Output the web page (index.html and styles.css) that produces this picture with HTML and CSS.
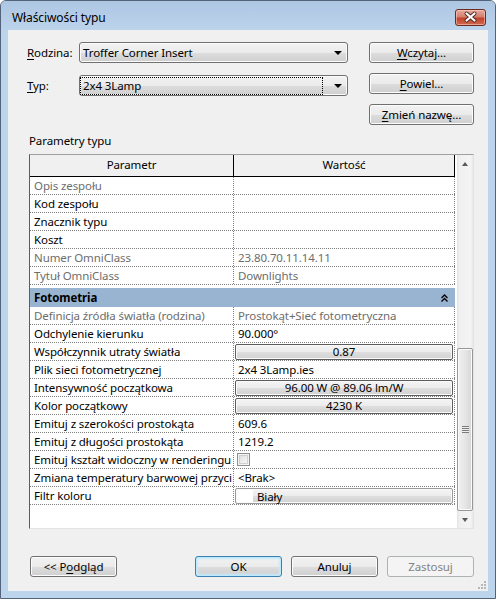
FILE: index.html
```html
<!DOCTYPE html>
<html lang="pl">
<head>
  <meta charset="UTF-8">
  <meta name="viewport" content="width=device-width, initial-scale=1.0">
  <title>Właściwości typu</title>
  <link rel="stylesheet" href="styles.css">
</head>
<body>
  <div class="window">
    <!-- Title bar -->
    <div class="titlebar">
      <span class="title">Właściwości typu</span>
      <button class="close-btn">
        <svg width="31" height="17" viewBox="0 0 31 17">
          <path d="M11.5 4.5 L19.5 11.5 M19.5 4.5 L11.5 11.5" stroke="#4a2a26" stroke-width="4" stroke-linecap="round"/>
          <path d="M11.5 4.5 L19.5 11.5 M19.5 4.5 L11.5 11.5" stroke="#ffffff" stroke-width="2.2" stroke-linecap="round"/>
        </svg>
      </button>
    </div>

    <div class="client">
      <!-- Family / type selectors and the buttons beside them -->
      <div class="top">
        <div class="fields">
          <div class="field">
            <label><u>R</u>odzina:</label>
            <div class="combo">
              <span class="combo-text">Troffer Corner Insert</span>
              <span class="arrow"></span>
            </div>
          </div>
          <div class="field">
            <label><u>T</u>yp:</label>
            <div class="combo">
              <span class="combo-text focus-rect">2x4 3Lamp</span>
              <span class="arrow"></span>
            </div>
          </div>
        </div>
        <div class="side-buttons">
          <button class="btn"><u>W</u>czytaj…</button>
          <button class="btn"><u>P</u>owiel…</button>
          <button class="btn"><u>Z</u>mień nazwę…</button>
        </div>
      </div>

      <div class="section-label">Parametry typu</div>

      <!-- Property grid -->
      <div class="grid">
        <div class="grid-body">
          <div class="row header">
            <div class="cell c1">Parametr</div>
            <div class="cell c2">Wartość</div>
          </div>
          <div class="row disabled"><div class="cell c1">Opis zespołu</div><div class="cell c2"></div></div>
          <div class="row"><div class="cell c1">Kod zespołu</div><div class="cell c2"></div></div>
          <div class="row"><div class="cell c1">Znacznik typu</div><div class="cell c2"></div></div>
          <div class="row"><div class="cell c1">Koszt</div><div class="cell c2"></div></div>
          <div class="row disabled"><div class="cell c1">Numer OmniClass</div><div class="cell c2">23.80.70.11.14.11</div></div>
          <div class="row disabled"><div class="cell c1">Tytuł OmniClass</div><div class="cell c2">Downlights</div></div>

          <div class="group">
            <span>Fotometria</span>
            <svg class="collapse" width="7" height="8" viewBox="0 0 7 8">
              <path d="M0.5 4 L3.5 1 L6.5 4 M0.5 7.5 L3.5 4.5 L6.5 7.5" fill="none" stroke="#000" stroke-width="1.3"/>
            </svg>
          </div>
          <div class="row disabled"><div class="cell c1">Definicja źródła światła (rodzina)</div><div class="cell c2">Prostokąt+Sieć fotometryczna</div></div>
          <div class="row"><div class="cell c1">Odchylenie kierunku</div><div class="cell c2">90.000°</div></div>
          <div class="row"><div class="cell c1">Współczynnik utraty światła</div><div class="cell c2"><div class="value-btn">0.87</div></div></div>
          <div class="row"><div class="cell c1">Plik sieci fotometrycznej</div><div class="cell c2">2x4 3Lamp.ies</div></div>
          <div class="row"><div class="cell c1">Intensywność początkowa</div><div class="cell c2"><div class="value-btn">96.00 W @ 89.06 lm/W</div></div></div>
          <div class="row"><div class="cell c1">Kolor początkowy</div><div class="cell c2"><div class="value-btn">4230 K</div></div></div>
          <div class="row"><div class="cell c1">Emituj z szerokości prostokąta</div><div class="cell c2">609.6</div></div>
          <div class="row"><div class="cell c1">Emituj z długości prostokąta</div><div class="cell c2">1219.2</div></div>
          <div class="row"><div class="cell c1">Emituj kształt widoczny w renderingu</div><div class="cell c2"><span class="checkbox"></span></div></div>
          <div class="row"><div class="cell c1">Zmiana temperatury barwowej przyci</div><div class="cell c2">&lt;Brak&gt;</div></div>
          <div class="row"><div class="cell c1">Filtr koloru</div><div class="cell c2"><div class="color-btn"><span class="swatch"></span>Biały</div></div></div>
        </div>

        <div class="scrollbar">
          <div class="sb-btn"><span class="sb-arrow up"></span></div>
          <div class="sb-track">
            <div class="sb-thumb"><span class="gripper"></span></div>
          </div>
          <div class="sb-btn"><span class="sb-arrow down"></span></div>
        </div>
      </div>

      <!-- Dialog buttons -->
      <div class="footer">
        <button class="btn wide">&lt;&lt; P<u>o</u>dgląd</button>
        <div class="footer-right">
          <button class="btn wide default">OK</button>
          <button class="btn wide">Anuluj</button>
          <button class="btn wide" disabled>Zastosuj</button>
        </div>
      </div>

      <svg class="grip" width="10" height="10" viewBox="0 0 10 10">
        <g fill="#b8b8b8">
          <rect x="7" y="1" width="2" height="2"/>
          <rect x="4" y="4" width="2" height="2"/><rect x="7" y="4" width="2" height="2"/>
          <rect x="1" y="7" width="2" height="2"/><rect x="4" y="7" width="2" height="2"/><rect x="7" y="7" width="2" height="2"/>
        </g>
      </svg>
    </div>
  </div>
</body>
</html>
```

FILE: styles.css
```css
/* Windows 7 style dialog */
* {
  box-sizing: border-box;
}
body {
  margin: 0;
  font-family: "Noto Sans", "Open Sans", sans-serif;
  font-size: 11.5px;
  letter-spacing: -0.1px;
  color: #000;
  background: #fff;
}
button {
  font-family: inherit;
  font-size: inherit;
  letter-spacing: inherit;
  color: #000;
}
u {
  text-decoration-thickness: 1px;
  text-underline-offset: 2px;
}

.window {
  width: 496px;
  height: 599px;
  border: 1px solid #53647a;
  border-radius: 6px 6px 0 0;
  background: #bdd4ed;
  display: flex;
  flex-direction: column;
}
.titlebar {
  height: 29px;
  display: flex;
  justify-content: space-between;
  align-items: flex-start;
  padding: 8px 9px 0 11px;
  border-radius: 5px 5px 0 0;
  background: linear-gradient(#adc6e2, #bcd3ec);
}
.title {
  font-size: 12px;
  line-height: 18px;
}
.close-btn {
  width: 31px;
  height: 17px;
  padding: 0;
  border: 1px solid #6e2a20;
  border-radius: 3px;
  background: linear-gradient(#e7a99d 0%, #d5806f 45%, #c2412c 55%, #cf6a4e 100%);
  box-shadow: inset 0 0 0 1px rgba(255, 220, 210, 0.5);
  display: flex;
}
.close-btn svg {
  margin: -1px;
}

.client {
  flex: 1;
  margin: 0 7px 7px;
  background: #f0f0f0;
  display: flex;
  flex-direction: column;
  position: relative;
}

/* Top area */
.top {
  display: flex;
  justify-content: space-between;
  padding: 12px 14px 0 19px;
}
.fields {
  display: flex;
  flex-direction: column;
  gap: 12px;
}
.field {
  display: flex;
  align-items: center;
}
.field label {
  width: 52px;
}
.combo {
  width: 269px;
  height: 21px;
  border: 1px solid #707070;
  border-radius: 3px;
  background: linear-gradient(#f2f2f2 0%, #ebebeb 50%, #dddddd 51%, #cfcfcf 100%);
  box-shadow: inset 0 0 0 1px #fbfbfb;
  display: flex;
  align-items: center;
  padding: 0 5px 0 1px;
}
.combo-text {
  flex: 1;
  padding: 0 2px;
  line-height: 16px;
  margin-right: 12px;
}
.focus-rect {
  outline: 1px dotted #000;
  outline-offset: 0;
}
.arrow {
  width: 0;
  height: 0;
  border-left: 4px solid transparent;
  border-right: 4px solid transparent;
  border-top: 4px solid #000;
}
.side-buttons {
  display: flex;
  flex-direction: column;
  gap: 10px;
}
.btn {
  width: 105px;
  height: 21px;
  padding: 0;
  border: 1px solid #707070;
  border-radius: 3px;
  background: linear-gradient(#f2f2f2 0%, #ebebeb 50%, #dddddd 51%, #cfcfcf 100%);
  box-shadow: inset 0 0 0 1px #fcfcfc;
  line-height: 17px;
}
.btn.wide {
  width: 87px;
}
.btn.default {
  border-color: #3c7fb1;
  box-shadow: inset 0 0 0 1px #bde9fd, inset 0 0 2px 2px #c7ebfb;
}
.btn:disabled {
  border-color: #adb2b5;
  background: #f4f4f4;
  box-shadow: none;
  color: #838383;
}

.section-label {
  margin: 9px 0 6px 21px;
  line-height: 14px;
}

/* Property grid */
.grid {
  height: 375px;
  margin: 0 14px 0 21px;
  border: 1px solid;
  border-color: #a0a0a0 #e3e3e3 #e3e3e3 #5e5e5e;
  background: #fff;
  display: flex;
}
.grid-body {
  flex: 1;
  overflow: hidden;
}
.row {
  display: flex;
  width: 425px;
  height: 18px;
  border-bottom: 1px dotted #808080;
  line-height: 17px;
}
.cell {
  white-space: nowrap;
  overflow: hidden;
  padding-left: 4px;
}
.c1 {
  width: 204px;
  border-right: 1px dotted #808080;
}
.c2 {
  width: 221px;
  border-right: 1px dotted #808080;
}
.row.header {
  height: 22px;
  background: #f0f0f0;
  border-bottom: 1px solid #000;
  line-height: 20px;
}
.row.header .cell {
  text-align: center;
  padding-left: 0;
  border-right: 1px solid #000;
}
.row.disabled {
  color: #6d6d6d;
}
.group {
  width: 425px;
  height: 19px;
  margin-top: 3px;
  background: #99b4d1;
  font-weight: bold;
  line-height: 19px;
  padding: 0 7px 0 4px;
  display: flex;
  justify-content: space-between;
  align-items: center;
}
.value-btn,
.color-btn {
  height: 16px;
  margin: 1px 1px 0 -3px;
  border: 1px solid #5c5c5c;
  border-radius: 2px;
  background: linear-gradient(#f4f4f4 0%, #ececec 50%, #dedede 51%, #d2d2d2 100%);
  box-shadow: inset 0 0 0 1px #fafafa;
  text-align: center;
  line-height: 14px;
}
.color-btn {
  border-color: #9a9a9a;
  text-align: left;
  display: flex;
  padding: 1px;
}
.swatch {
  width: 16px;
  height: 12px;
  background: #fff;
  margin-right: 4px;
}
.checkbox {
  display: inline-block;
  width: 13px;
  height: 13px;
  margin: 2px 0 0 -1px;
  vertical-align: top;
  border: 1px solid #8e8f8f;
  background: linear-gradient(135deg, #dcdcdc, #fbfbfb);
  box-shadow: inset 0 0 0 1px #f4f4f4, inset 0 0 0 2px #d0d0d0;
}

/* Scrollbar */
.scrollbar {
  width: 16px;
  margin-left: 1px;
  display: flex;
  flex-direction: column;
  background: linear-gradient(to right, #e3e3e3, #f0f0f0 15%, #f4f4f4 85%, #e8e8e8);
}
.sb-btn {
  height: 17px;
  display: flex;
  align-items: center;
  justify-content: center;
}
.sb-arrow {
  width: 0;
  height: 0;
  border-left: 3.5px solid transparent;
  border-right: 3.5px solid transparent;
}
.sb-arrow.up {
  border-bottom: 4px solid #5a5a5a;
}
.sb-arrow.down {
  border-top: 4px solid #5a5a5a;
}
.sb-track {
  flex: 1;
  display: flex;
  flex-direction: column;
  justify-content: flex-end;
}
.sb-thumb {
  height: 163px;
  border: 1px solid #979797;
  border-radius: 2px;
  background: linear-gradient(to right, #f1f1f1, #e6e6e6 50%, #d6d6d6);
  box-shadow: inset 0 0 0 1px #fbfbfb;
  display: flex;
  align-items: center;
  justify-content: center;
}
.gripper {
  width: 7px;
  height: 7px;
  background: repeating-linear-gradient(#7b7b7b 0, #7b7b7b 1px, #eeeeee 1px, #eeeeee 2px);
}

/* Footer */
.footer {
  display: flex;
  justify-content: space-between;
  padding: 0 14px 0 22px;
  margin-top: 27px;
}
.footer-right {
  display: flex;
  gap: 9px;
}
.grip {
  position: absolute;
  right: 1px;
  bottom: 1px;
}
```
